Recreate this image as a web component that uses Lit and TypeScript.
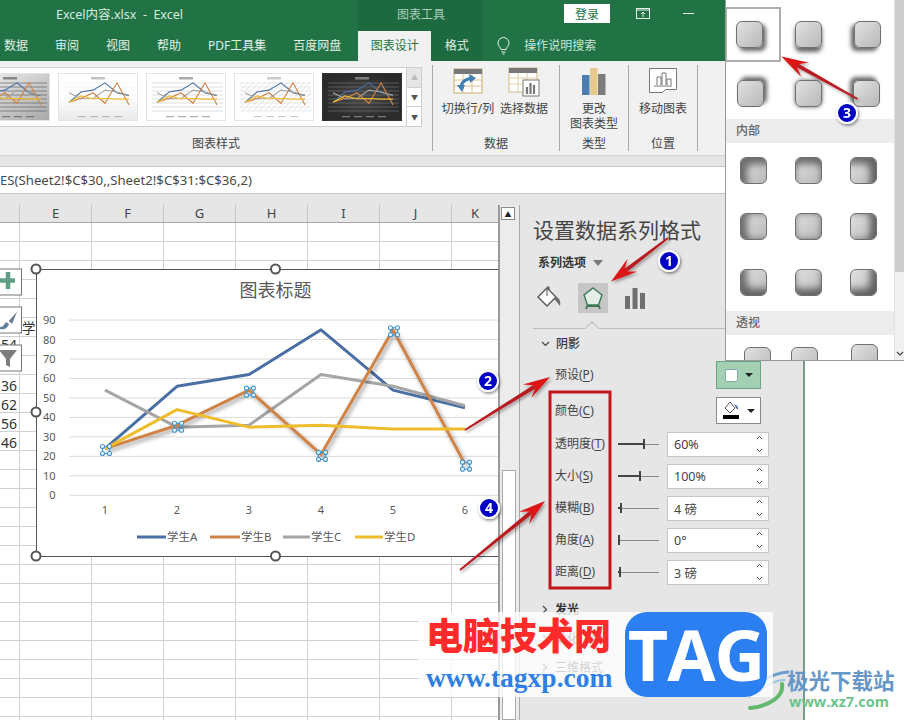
import { LitElement, html, css, svg } from "lit";
import { customElement } from "lit/decorators.js";

const SERIES = [
  { name: "A", c: "#4a6fa5", v: [24, 56, 62, 85, 54, 45] },
  { name: "C", c: "#a5a5a5", v: [54, 35, 36, 62, 56, 46] },
  { name: "B", c: "#cf8347", v: [24, 36, 54, 21, 85, 16] },
  { name: "D", c: "#efbd2b", v: [24, 44, 35, 36, 34, 34] },
];
const cx = (i: number) => 105 + i * 72;
const cy = (v: number) => 495.3 - v * 1.947;
const pts = (v: number[]) => v.map((n, i) => `${cx(i)},${cy(n)}`).join(" ");
const miniPts = (v: number[]) => v.map((n, i) => `${11 + i * 12},${37 - n * 0.32}`).join(" ");

const THEMES = [
  { bg: "url(#mg1)", grid: "#555", text: "#333", hatch: false },
  { bg: "url(#mg2)", grid: "#eee", text: "#888", hatch: false },
  { bg: "#fff", grid: "#c9c9c9", text: "#555", hatch: false },
  { bg: "#fff", grid: "#ddd", text: "#999", hatch: true },
  { bg: "url(#mg3)", grid: "#777", text: "#ccc", hatch: false },
];

function mini(t: (typeof THEMES)[number], i: number) {
  return html`<svg class=${i === 0 ? "thumb first" : "thumb"} viewBox="0 0 80 48" width="80" height="48">
    <rect x="0.5" y="0.5" width="79" height="47" fill=${t.bg} stroke=${i === 4 ? "#333" : "#e4e4e4"}></rect>
    ${t.hatch ? svg`<rect x="6" y="9" width="71" height="29" fill="url(#hatch)"></rect>` : null}
    ${[10, 14, 18, 22, 26, 30, 34, 38].map((y) => svg`<line x1="6" x2="77" y1=${y} y2=${y} stroke=${t.grid} stroke-width=".6"></line>`)}
    <rect x="33" y="4" width="14" height="2.500" fill=${t.text} opacity=".5"></rect>
    ${SERIES.map((s) => svg`<polyline points=${miniPts(s.v)} fill="none" stroke=${s.c} stroke-width="1.100"></polyline>`)}
    ${[24, 36, 48, 60].map((x) => svg`<rect x=${x - 4} y="43" width="8" height="1.200" fill=${t.text} opacity=".5"></rect>`)}
  </svg>`;
}

const clover = (x: number, y: number) => svg`<g fill="#fff" stroke="#3f97cf" stroke-width="1.100">
  <rect x=${x - 3.5} y=${y - 3.5} width="7" height="7" fill="none"></rect>
  <circle cx=${x - 3.5} cy=${y - 3.5} r="2"></circle><circle cx=${x + 3.5} cy=${y - 3.5} r="2"></circle>
  <circle cx=${x - 3.5} cy=${y + 3.5} r="2"></circle><circle cx=${x + 3.5} cy=${y + 3.5} r="2"></circle></g>`;

function arrow(x1: number, y1: number, x2: number, y2: number) {
  const a = Math.atan2(y2 - y1, x2 - x1);
  const ux = Math.cos(a), uy = Math.sin(a), nx = -uy, ny = ux;
  const P = (d: number, w: number) => `${x2 - ux * d + nx * w},${y2 - uy * d + ny * w}`;
  const L = Math.hypot(x2 - x1, y2 - y1);
  const shaft = [P(16, 2), P(L, 1), P(L, -1), P(16, -2)].join(" ");
  const head = [P(0, 0), P(27, 8), P(19, 2), P(19, -2), P(27, -8)].join(" ");
  return svg`<g filter="url(#ashadow)"><polygon points=${shaft} fill="#b81c20"></polygon><polygon points=${head} fill="#dc1416"></polygon></g>`;
}

const badge = (x: number, y: number, n: string) => svg`<g filter="url(#bshadow)"><circle cx=${x} cy=${y} r="10" fill="#0000c4" stroke="#fff" stroke-width="2"></circle>
  <text x=${x} y=${y + 5} text-anchor="middle" font-size="14" font-weight="700" fill="#fff">${n}</text></g>`;

const OUT = ["3px 3px", "0 4px", "-3px 3px", "3px -3px", "0 0", "-3px -3px"].map((o) => `${o} 4px rgba(0,0,0,.6)`);
const IN = ["7px 7px", "0 7px", "-7px 7px", "7px 0", "0 0", "-7px 0", "7px -7px", "0 -7px", "-7px -7px"].map(
  (o) => `inset ${o} 7px -1px rgba(0,0,0,.5)`
);
const ROWS = [
  { label: "透明度", k: "T", val: "60%", pos: 25 },
  { label: "大小", k: "S", val: "100%", pos: 21 },
  { label: "模糊", k: "B", val: "4 磅", pos: 2 },
  { label: "角度", k: "A", val: "0°", pos: 0 },
  { label: "距离", k: "D", val: "3 磅", pos: 1 },
];
const TABS = ["数据", "审阅", "视图", "帮助", "PDF工具集", "百度网盘"];
const COLS = ["E", "F", "G", "H", "I", "J", "K"];

@customElement("app-root")
export class AppRoot extends LitElement {
  static styles = css`
    :host { display: block; width: 904px; height: 720px; overflow: hidden; position: relative; background: #fff;
      font-family: "Noto Sans", "Noto Sans CJK SC", sans-serif; color: #444; font-size: 12px; }
    .app { display: flex; flex-direction: column; height: 720px; }
    .title { height: 31px; background: #217346; display: flex; align-items: center; color: #d9ece0; flex: none; padding-bottom: 4px; box-sizing: border-box; }
    .fname { margin-left: 56px; width: 302px; font-size: 12.5px; white-space: pre; }
    .tool { width: 124px; height: 31px; margin-bottom: -4px; padding: 0 0 4px 39px; background: #1e6a40; color: #a9cdb8; display: flex; align-items: center; box-sizing: border-box; font-size: 12px; }
    .login { margin-left: 82px; width: 46px; height: 19px; background: #fff; color: #217346; display: flex; align-items: center; justify-content: center; font-size: 12px; }
    .tico { margin-left: 26px; display: flex; }
    .minim { margin-left: 33px; width: 11px; height: 1px; background: #e4f1e9; }
    .tabs { height: 30px; background: #217346; display: flex; align-items: center; color: #e2f0e8; flex: none; padding-left: 4px; }
    .tab { margin-right: 27px; white-space: nowrap; padding-bottom: 3px; }
    .tab.active { align-self: stretch; background: #f1f1f1; color: #217346; width: 73px; margin: 0 0 0 -10px; display: flex; align-items: center; justify-content: center; box-sizing: border-box; }
    .tab.fmt { align-self: stretch; background: #1e6a40; width: 51px; margin: 0; display: flex; align-items: center; justify-content: center; box-sizing: border-box; }
    .bulb { margin-left: 15px; display: flex; }
    .search { margin-left: 14px; color: #cfe5d8; padding-bottom: 3px; }
    .ribbon { height: 94px; background: #f1f1f1; display: flex; flex: none; box-sizing: border-box; padding-top: 4px; }
    .group { height: 86px; border-right: 1px solid #a9a9a9; display: flex; flex-direction: column; flex: none; box-sizing: border-box; }
    .gbody { height: 71px; display: flex; justify-content: center; }
    .glabel { height: 15px; line-height: 15px; text-align: center; color: #444; }
    .g1 { width: 433px; }
    .g1 .gbody { display: block; padding-top: 2px; box-sizing: border-box; }
    .g2 { width: 127px; } .g3 { width: 69px; } .g4 { width: 69px; }
    .gallery { width: 422px; height: 60px; display: flex; background: #fff; box-sizing: border-box; border: 1px solid #cfcfcf; border-left: 0; overflow: hidden; }
    .thumbs { width: 406px; display: flex; gap: 8px; padding-top: 5px; overflow: hidden; flex: none; }
    .thumb { flex: none; }
    .thumb.first { margin-left: -30px; }
    .gscroll { width: 15px; border-left: 1px solid #cfcfcf; display: flex; flex-direction: column; flex: none; }
    .gscroll span { flex: 1; border-bottom: 1px solid #cfcfcf; display: flex; align-items: center; justify-content: center; color: #555; font-size: 7px; }
    .gscroll span:first-child { background: #e6e6e6; color: #bbb; }
    .gscroll span:last-child { border-bottom: 0; }
    .rbtn { display: flex; flex-direction: column; align-items: center; width: 56px; line-height: 15px; text-align: center; white-space: nowrap; color: #444; }
    .rico { height: 32px; display: flex; align-items: flex-start; justify-content: center; margin-bottom: 4px; }
    .strip { height: 11px; background: #e5e5e5; border-top: 1px solid #d6d6d6; box-sizing: border-box; flex: none; }
    .formula { height: 28px; background: #fff; border-top: 1px solid #c8c8c8; border-bottom: 1px solid #c8c8c8; box-sizing: border-box; font-size: 13.2px; line-height: 26px; white-space: nowrap; color: #4a4a4a; flex: none; }
    .gap { height: 11px; background: #e6e6e6; flex: none; }
    .main { flex: 1; display: flex; min-height: 0; }
    .sheet { width: 498px; flex: none; display: flex; flex-direction: column; position: relative; overflow: hidden; }
    .head { height: 18px; background: #e6e6e6; border-bottom: 1px solid #a6a6a6; display: grid; grid-template-columns: 19px repeat(6, 72px) 47px; flex: none; box-sizing: border-box; font-size: 13px; line-height: 17px; text-align: center; color: #444; }
    .head span { border-left: 1px solid #c4c4c4; }
    .head .blank { border: 0; }
    .cells { flex: 1; position: relative;
      background-image: linear-gradient(#d0d0d0 1px, transparent 1px), linear-gradient(90deg, #d0d0d0 1px, transparent 1px);
      background-size: 100% 19px, 72px 100%; background-position: 0 18px, 19px 0; }
    .chart { position: absolute; left: 0; top: 0; }
    .vbar { width: 21px; flex: none; background: #ececec; border-left: 2px solid #9a9a9a; box-sizing: border-box; display: flex; flex-direction: column; padding: 2px 0 0 1px; }
    .up { width: 14px; height: 13px; background: #fff; border: 1px solid #888; box-sizing: border-box; display: flex; align-items: center; justify-content: center; font-size: 7px; color: #222; flex: none; }
    .track { height: 250px; flex: none; }
    .vthumb { flex: 1; margin-left: 1px; width: 14px; background: #fff; border: 1px solid #aaa; box-sizing: border-box; }
    .panel { width: 286px; flex: none; background: #e6e6e6; border-left: 1px solid #a9a9a9; border-right: 2px solid #7c9a88; box-sizing: border-box; padding: 11px 0 0 13px; color: #444; }
    .ptitle { font-size: 21px; line-height: 28px; color: #444; white-space: nowrap; }
    .psel { margin: 11px 0 0 5px; font-weight: 700; line-height: 16px; display: flex; align-items: center; gap: 7px; color: #333; }
    .tri { width: 0; height: 0; border: 5px solid transparent; border-top: 6px solid #777; border-bottom: 0; }
    .picons { display: flex; margin-top: 12px; gap: 12px; padding-left: 2px; }
    .pi { width: 30px; height: 30px; display: flex; align-items: center; justify-content: center; }
    .pi.on { background: #c6c6c6; margin: 0 0 0 1px; }
    .divider { margin-top: 15px; height: 1px; background: #bdbdbd; position: relative; width: 250px; }
    .divider::after { content: ""; position: absolute; left: 54px; top: -5px; width: 9px; height: 9px; background: #e6e6e6; border-left: 1px solid #bdbdbd; border-top: 1px solid #bdbdbd; transform: rotate(45deg); }
    .sec { display: flex; align-items: center; height: 22px; gap: 6px; padding-left: 8px; font-weight: 500; color: #333; }
    .sec.first { margin-top: 3px; }
    .sec.closed { margin-bottom: 7px; padding-left: 7px; }
    .sec.dim { color: #333; font-weight: 400; }
    .grid { display: grid; grid-template-columns: 63px 41px 102px; grid-template-rows: 28px 27px; grid-auto-rows: 24px; row-gap: 8px; margin: 7px 0 14px 22px; align-items: center; }
    .grid > .label { grid-column: 1; white-space: nowrap; padding-bottom: 2px; }
    .grid u { text-underline-offset: 2px; }
    .sbtn { grid-column: 2 / 4; justify-self: end; width: 45px; height: 28px; background: #a3cfb2; border: 1px solid #6fa483; box-sizing: border-box; display: flex; align-items: center; justify-content: center; gap: 7px; }
    .sbtn.plain { background: #fff; border-color: #8a8a8a; height: 27px; }
    .swatch { width: 13px; height: 13px; background: #fff; border-radius: 2px; border: 1px solid #8aa; box-sizing: border-box; }
    .drop { width: 0; height: 0; border: 4px solid transparent; border-top: 4px solid #222; border-bottom: 0; }
    .slider { height: 1px; background: #888; position: relative; width: 41px; }
    .slider b { display: block; height: 2px; background: #444; position: relative; top: -.5px; }
    .slider i { position: absolute; top: -4.5px; width: 2px; height: 10px; background: #444; }
    .input { margin-left: 8px; height: 25px; width: 102px; background: #fff; border: 1px solid #c6c6c6; box-sizing: border-box; display: flex; align-items: center; justify-content: space-between; padding: 0 5px 0 6px; font-size: 12.5px; color: #444; }
    .white { flex: 1; background: #fff; }
    .menu { position: absolute; left: 725px; top: 0; width: 179px; height: 361px; background: #fff; border-left: 1px solid #9a9a9a; border-bottom: 1px solid #9a9a9a; box-sizing: border-box; display: flex; overflow: hidden; }
    .mlist { width: 168px; flex: none; }
    .mrow { display: flex; position: relative; }
    .tile { width: 27px; height: 27px; border-radius: 6px; border: 1px solid #707070; box-sizing: border-box; background: linear-gradient(135deg, #e2e2e2, #b8b8b8); flex: none; position: relative; }
    .tile.sel::after { content: ""; position: absolute; left: -12px; right: -19px; top: -15px; bottom: -15px; border: 2px solid #aeaeae; }
    .mhead { height: 24px; line-height: 24px; background: #ececec; padding-left: 10px; color: #666; font-weight: 500; }
    .mbar { width: 10px; flex: none; background: #f0f0f0; display: flex; flex-direction: column; justify-content: space-between; align-items: center; border-left: 1px solid #e2e2e2; }
    .mthumb { height: 272px; width: 100%; background: #cdcdcd; }
    .mdown { margin-bottom: 3px; display: flex; }
    .over { position: absolute; left: 0; top: 0; pointer-events: none; }
    .wm { position: absolute; left: 418px; top: 612px; width: 355px; height: 85px; background: rgba(255,255,255,.78); display: flex; padding-left: 8px; box-sizing: border-box; }
    .wmt { width: 199px; flex: none; display: flex; flex-direction: column; }
    .wm1 { font-size: 37px; line-height: 44px; font-weight: 900; color: #ff2b2b; white-space: nowrap; margin-top: 2px; }
    .wm2 { font-family: "Liberation Serif", serif; font-size: 27.5px; font-weight: 700; line-height: 30px; margin-top: 5px; color: #2f7fe4; white-space: nowrap; }
    .tag { width: 142px; height: 85px; background: #2b7ff1; border-radius: 22px; color: #fff; font-family: "Open Sans", sans-serif; font-weight: 700; font-size: 70px; line-height: 85px; text-align: center; letter-spacing: -1px; }
    .xz { position: absolute; left: 787px; top: 669px; white-space: nowrap; }
    .xz1 { font-size: 21.5px; line-height: 24px; font-weight: 700; color: #6697c6; }
    .xz2 { font-size: 14.5px; line-height: 17px; font-weight: 700; color: #6cc48d; margin-left: 2px; font-family: "Open Sans", sans-serif; }
    .defs { position: absolute; }
    .bold { font-weight: 700; }
  `;

  chevUp() {
    return html`<svg width="7" height="18" viewBox="0 0 7 18"><path d="M1 4l2.500-2.500L6 4M1 14l2.500 2.500L6 14" fill="none" stroke="#444" stroke-width="1"/></svg>`;
  }
  chev(open: boolean) {
    return html`<svg width="9" height="9" viewBox="0 0 9 9"><path d=${open ? "M1 3l3.500 3.500L8 3" : "M3 1l3.500 3.500L3 8"} fill="none" stroke="#444" stroke-width="1.200"/></svg>`;
  }

  render() {
    return html`
      <svg class="defs" width="0" height="0">
        <defs>
          <linearGradient id="mg1" x1="0" y1="0" x2="1" y2="1"><stop offset="0" stop-color="#f4f4f4"/><stop offset="1" stop-color="#a8a8a8"/></linearGradient>
          <linearGradient id="mg2" x1="0" y1="0" x2="0" y2="1"><stop offset=".5" stop-color="#fff"/><stop offset="1" stop-color="#e8e8e8"/></linearGradient>
          <radialGradient id="mg3"><stop offset="0" stop-color="#4a4a4a"/><stop offset="1" stop-color="#2b2b2b"/></radialGradient>
          <pattern id="hatch" width="4" height="4" patternUnits="userSpaceOnUse" patternTransform="rotate(45)"><line x1="0" y1="0" x2="0" y2="4" stroke="#cfcfcf" stroke-width=".8"/></pattern>
        </defs>
      </svg>
      <div class="app">
        <div class="title">
          <span class="fname">Excel内容.xlsx  -  Excel</span>
          <span class="tool">图表工具</span>
          <span class="login">登录</span>
          <span class="tico"><svg width="14" height="11" viewBox="0 0 14 11"><rect x=".5" y=".5" width="13" height="10" fill="none" stroke="#e4f1e9"/><path d="M1 2h12M7 9V4M5 6l2-2 2 2" fill="none" stroke="#e4f1e9"/></svg></span>
          <span class="minim"></span>
        </div>
        <div class="tabs">
          ${TABS.map((t) => html`<span class="tab">${t}</span>`)}
          <span class="tab active">图表设计</span>
          <span class="tab fmt">格式</span>
          <span class="bulb"><svg width="13" height="18" viewBox="0 0 13 18"><path d="M4 12.500C3.500 10 1 9 1 6a5.500 5.500 0 0 1 11 0c0 3-2.500 4-3 6.500zM4.500 15h4M5.500 17h2" fill="none" stroke="#e6f2ea" stroke-width="1"/></svg></span>
          <span class="search">操作说明搜索</span>
        </div>
        <div class="ribbon">
          <div class="group g1">
            <div class="gbody">
              <div class="gallery">
                <div class="thumbs">${THEMES.map((t, i) => mini(t, i))}</div>
                <div class="gscroll"><span>▲</span><span>▼</span><span>▼</span></div>
              </div>
            </div>
            <div class="glabel">图表样式</div>
          </div>
          <div class="group g2">
            <div class="gbody">
              <div class="rbtn">
                <span class="rico"><svg width="30" height="30" viewBox="0 0 30 30"><rect x="1" y="4" width="28" height="24" fill="#fff" stroke="#c9a86a"/><rect x="1" y="4" width="28" height="5" fill="#777"/><path d="M1 15h28M1 21h28M10 9v19M19 9v19" stroke="#d8c08a"/><path d="M8 23c0-6 5-9 11-10" fill="none" stroke="#3f7fb5" stroke-width="3"/><path d="M16 9l7 4-6 5zM4 20l8 0-3 7z" fill="#3f7fb5"/></svg></span>
                切换行/列
              </div>
              <div class="rbtn">
                <span class="rico"><svg width="32" height="32" viewBox="0 0 32 32"><rect x="1" y="3" width="28" height="24" fill="#fff" stroke="#cfb988"/><rect x="1" y="3" width="28" height="5" fill="#777"/><path d="M1 13h28M1 19h28M10 8v19M19 8v19" stroke="#e0cfa0"/><rect x="15" y="15" width="16" height="16" fill="#fff" stroke="#777"/><path d="M19 29v-7M22.500 29V18M26 29v-9" stroke="#777" stroke-width="2.200"/></svg></span>
                选择数据
              </div>
            </div>
            <div class="glabel">数据</div>
          </div>
          <div class="group g3">
            <div class="gbody">
              <div class="rbtn">
                <span class="rico"><svg width="24" height="30" viewBox="0 0 24 30"><rect x="0" y="10" width="7.500" height="20" fill="#4a7eb3"/><rect x="8" y="3" width="7.500" height="27" fill="#e8c98a"/><rect x="16" y="9" width="7.500" height="21" fill="#7c7c7c"/></svg></span>
                更改<br />图表类型
              </div>
            </div>
            <div class="glabel">类型</div>
          </div>
          <div class="group g4">
            <div class="gbody">
              <div class="rbtn">
                <span class="rico"><svg width="30" height="30" viewBox="0 0 30 30"><path d="M1.500 3.500h27v21h-11l-3 3h-13z" fill="#fff" stroke="#777"/><path d="M6 21h18M9 20v-8h4v8M14 20V8h4v12M19 20v-6h4v6" fill="#fff" stroke="#777"/></svg></span>
                移动图表
              </div>
            </div>
            <div class="glabel">位置</div>
          </div>
        </div>
        <div class="strip"></div>
        <div class="formula">ES(Sheet2!$C$30,,Sheet2!$C$31:$C$36,2)</div>
        <div class="gap"></div>
        <div class="main">
          <div class="sheet">
            <div class="head"><span class="blank"></span>${COLS.map((c) => html`<span>${c}</span>`)}</div>
            <div class="cells">
              <svg class="chart" width="498" height="497" viewBox="0 223 498 497" font-size="11">
                <defs>
                  <filter id="lshadow" x="-10%" y="-10%" width="120%" height="130%"><feDropShadow dx="2" dy="2.500" stdDeviation="2" flood-color="#000" flood-opacity=".4"/></filter>
                </defs>
                <text x="17" y="350" font-size="14" text-anchor="end" fill="#333">54</text>
                <text x="22" y="333" font-size="13.500" fill="#333">学</text>
                ${[["36", 391], ["62", 410], ["56", 429], ["46", 448]].map(([t, y]) => svg`<text x="17" y=${y} font-size="14" text-anchor="end" fill="#333">${t}</text>`)}
                <rect x="-5" y="269" width="26.500" height="26" fill="#fff" stroke="#777"/>
                <path d="M8 272v17M0 280.500h15" stroke="#5f9e84" stroke-width="4.500"/>
                <rect x="-5" y="307" width="26.500" height="26" fill="#fff" stroke="#777"/>
                <path d="M17 312l-8 9 3 3zM0 329c4 1 8-1 9-5l-3-2c-2 3-3 5-6 5z" fill="#5f7f9e"/>
                <path d="M17 312l-8 9 1 1z" fill="#777"/>
                <rect x="-5" y="345" width="26.500" height="26" fill="#fff" stroke="#777"/>
                <path d="M-1 350h18l-7 9v8l-4-2v-6z" fill="#7c7c7c"/>
                <rect x="36.500" y="269.500" width="480" height="287" fill="#fff" stroke="#555"/>
                ${[0, 1, 2, 3, 4, 5, 6, 7, 8, 9].map((i) => svg`
                  <line x1="69" x2="498" y1=${cy(i * 10)} y2=${cy(i * 10)} stroke="#dcdcdc"></line>
                  <text x="55.500" y=${cy(i * 10) + 4} text-anchor="end" fill="#595959">${i * 10}</text>`)}
                ${[0, 1, 2, 3, 4, 5].map((i) => svg`<text x=${cx(i)} y="514" text-anchor="middle" fill="#595959">${i + 1}</text>`)}
                <text x="275.500" y="297" font-size="18" text-anchor="middle" fill="#595959">图表标题</text>
                ${SERIES.map((s) => svg`<polyline points=${pts(s.v)} fill="none" stroke=${s.c} stroke-width="3" stroke-linejoin="round" filter=${s.name === "B" ? "url(#lshadow)" : "none"}></polyline>`)}
                ${SERIES[2].v.map((n, i) => clover(cx(i) + 1, cy(n) + 1.5))}
                ${[["A", 137, 166, "#4a6fa5"], ["B", 210, 240, "#cf8347"], ["C", 283, 310, "#a5a5a5"], ["D", 355, 383, "#efbd2b"]].map(
                  ([n, a, b, c]) => svg`<line x1=${a} x2=${b} y1="537" y2="537" stroke=${c} stroke-width="3"></line>
                    <text x=${(b as number) + 1} y="541" font-size="11.500" fill="#595959">学生${n}</text>`
                )}
                ${[[36, 269], [275.5, 269], [36, 412], [36, 556], [275.5, 556]].map(([x, y]) => svg`<circle cx=${x} cy=${y} r="4.500" fill="#fff" stroke="#555" stroke-width="2"></circle>`)}
              </svg>
            </div>
          </div>
          <div class="vbar"><span class="up">▲</span><div class="track"></div><div class="vthumb"></div></div>
          <div class="panel">
            <div class="ptitle">设置数据系列格式</div>
            <div class="psel">系列选项<span class="tri"></span></div>
            <div class="picons">
              <span class="pi"><svg width="26" height="26" viewBox="0 0 26 26"><path d="M10 3L1 12l9 9 9-9z" fill="#fff" stroke="#555" stroke-width="1.400"/><path d="M10 3v8" stroke="#555"/><path d="M9 2c3-2 4 0 4 3M19 12c4 1 5 5 4 9-2-3-4-5-6-7z" fill="#6f6f6f"/></svg></span>
              <span class="pi on"><svg width="22" height="24" viewBox="0 0 22 24"><path d="M11 2l9 7-3.500 10h-11L2 9z" fill="#e3efe7" stroke="#3d7a53" stroke-width="1.400"/><path d="M5.500 19L4 23M16.500 19L18 23M5 20h12" stroke="#3d7a53" stroke-width="1.800"/></svg></span>
              <span class="pi"><svg width="20" height="21" viewBox="0 0 20 21"><path d="M0 8h5v13H0zM7.500 0h5v21h-5zM15 5h5v16h-5z" fill="#6f6f6f"/></svg></span>
            </div>
            <div class="divider"></div>
            <div class="sec first">${this.chev(true)}<span>阴影</span></div>
            <div class="grid">
              <span class="label">预设(<u>P</u>)</span>
              <span class="sbtn"><span class="swatch"></span><span class="drop"></span></span>
              <span class="label">颜色(<u>C</u>)</span>
              <span class="sbtn plain"><svg width="17" height="19" viewBox="0 0 17 19"><path d="M7 1L2 7l5 5 5-5z" fill="#fff" stroke="#555"/><path d="M11 3c3 1 5 3 4 6l-2-2z" fill="#5f7f9e"/><rect x="0" y="14" width="16" height="4" fill="#000"/></svg><span class="drop"></span></span>
              ${ROWS.map(
                (r) => html`
                  <span class="label">${r.label}(<u>${r.k}</u>)</span>
                  <span class="slider"><b style="width:${r.pos}px"></b><i style="left:${r.pos}px"></i></span>
                  <span class="input"><span>${r.val}</span>${this.chevUp()}</span>
                `
              )}
            </div>
            <div class="sec closed">${this.chev(false)}<span class="bold">发光</span></div>
            <div class="sec closed">${this.chev(false)}<span>柔化边缘</span></div>
            <div class="sec closed dim">${this.chev(false)}<span>三维格式</span></div>
          </div>
          <div class="white"></div>
        </div>
      </div>

      <div class="menu">
        <div class="mlist">
          <div class="mrow" style="padding:21px 0 0 10px;gap:32px">
            ${OUT.slice(0, 3).map((s, i) => html`<span class=${i === 0 ? "tile sel" : "tile"} style="box-shadow:${s}"></span>`)}
          </div>
          <div class="mrow" style="padding:32px 0 12px 11px;gap:31px">
            ${OUT.slice(3).map((s) => html`<span class="tile" style="box-shadow:${s}"></span>`)}
          </div>
          <div class="mhead">内部</div>
          ${[0, 3, 6].map(
            (n, i) => html`<div class="mrow" style="padding:${i === 0 ? 14 : 29}px 0 0 14px;gap:28px">
              ${IN.slice(n, n + 3).map((s) => html`<span class="tile" style="box-shadow:${s}"></span>`)}
            </div>`
          )}
          <div class="mhead" style="margin-top:15px">透视</div>
          <div class="mrow" style="padding:12px 0 0 18px;gap:20px">
            <span class="tile"></span><span class="tile"></span><span class="tile" style="margin:-3px 0 0 13px"></span>
          </div>
        </div>
        <div class="mbar"><div class="mthumb"></div><span class="mdown"><svg width="8" height="6" viewBox="0 0 8 6"><path d="M1 1l3 3 3-3" fill="none" stroke="#444" stroke-width="1.200"/></svg></span></div>
      </div>

      <svg class="over" width="904" height="720" viewBox="0 0 904 720" font-family="Noto Sans, sans-serif">
        <defs>
          <filter id="ashadow" x="-20%" y="-20%" width="140%" height="140%"><feDropShadow dx="1.500" dy="2" stdDeviation="1.500" flood-color="#000" flood-opacity=".35"/></filter>
          <filter id="bshadow" x="-30%" y="-30%" width="170%" height="170%"><feDropShadow dx="1" dy="1.500" stdDeviation="1.500" flood-color="#000" flood-opacity=".5"/></filter>
        </defs>
        <rect x="550" y="392" width="60" height="196" fill="none" stroke="#c1171c" stroke-width="3"/>
        ${arrow(668, 238, 611, 281.5)}
        ${arrow(465, 430, 550, 377)}
        ${arrow(857.5, 99, 781.5, 56.5)}
        ${arrow(460, 570, 545, 501)}
        ${badge(669, 261, "1")}
        ${badge(488, 381, "2")}
        ${badge(847, 113, "3")}
        ${badge(489, 508, "4")}
        <g fill="none" stroke-linecap="round">
          <path d="M788 672c-20 2-36 14-38 24" stroke="#6f9fcf" stroke-width="3"/>
          <path d="M785 680c-12 0-24 8-28 16" stroke="#9cc3e0" stroke-width="2"/>
          <path d="M782 684c2 12-12 22-32 24" stroke="#63b96b" stroke-width="4"/>
        </g>
      </svg>

      <div class="wm">
        <div class="wmt"><div class="wm1">电脑技术网</div><div class="wm2">www.tagxp.com</div></div>
        <div class="tag">TAG</div>
      </div>
      <div class="xz"><div class="xz1">极光下载站</div><div class="xz2">www.xz7.com</div></div>
    `;
  }
}
